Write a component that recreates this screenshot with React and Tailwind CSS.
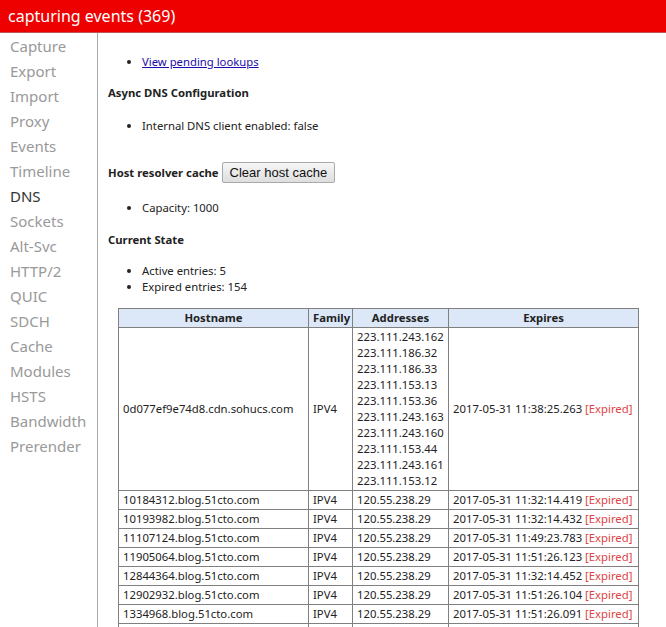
import React from "react";

const tabs = [
  "Capture", "Export", "Import", "Proxy", "Events", "Timeline", "DNS", "Sockets",
  "Alt-Svc", "HTTP/2", "QUIC", "SDCH", "Cache", "Modules", "HSTS", "Bandwidth", "Prerender",
];

const addrs = [
  "223.111.243.162", "223.111.186.32", "223.111.186.33", "223.111.153.13", "223.111.153.36",
  "223.111.243.163", "223.111.243.160", "223.111.153.44", "223.111.243.161", "223.111.153.12",
];

const rows = [
  ["10184312.blog.51cto.com", "2017-05-31 11:32:14.419"],
  ["10193982.blog.51cto.com", "2017-05-31 11:32:14.432"],
  ["11107124.blog.51cto.com", "2017-05-31 11:49:23.783"],
  ["11905064.blog.51cto.com", "2017-05-31 11:51:26.123"],
  ["12844364.blog.51cto.com", "2017-05-31 11:32:14.452"],
  ["12902932.blog.51cto.com", "2017-05-31 11:51:26.104"],
  ["1334968.blog.51cto.com", "2017-05-31 11:51:26.091"],
];

const td = "border border-[#808080] px-[4px] py-[1px] align-middle whitespace-nowrap";
const th = "border border-[#808080] px-[4px] py-[1px] font-bold text-center bg-[#dce8f8]";

export default function App() {
  return (
    <div className="w-[666px] h-[627px] overflow-hidden bg-white font-['Noto_Sans','Open_Sans',sans-serif] text-[#222]">
      <div className="h-[33px] bg-[#ee0000] border-b border-[#b55] text-white text-[16px] leading-[32px] pl-[8px]">
        capturing events (369)
      </div>
      <div className="flex h-[594px]">
        <div className="w-[98px] shrink-0 border-r border-[#aaa] pt-[1px] pl-[10px]">
          {tabs.map((t) => (
            <div
              key={t}
              className={`text-[15px] leading-[25px] ${t === "DNS" ? "text-[#333]" : "text-[#999]"}`}
            >
              {t}
            </div>
          ))}
        </div>
        <div className="flex-1 pl-[10px] text-[11.3px] leading-[16px]">
          <ul className="list-disc pl-[34px] mt-[21px]">
            <li>
              <a href="#" className="text-[#1a0dab] underline">View pending lookups</a>
            </li>
          </ul>
          <div className="font-bold mt-[15px]">Async DNS Configuration</div>
          <ul className="list-disc pl-[34px] mt-[17px]">
            <li>Internal DNS client enabled: false</li>
          </ul>
          <div className="flex items-center mt-[28px] h-[21px]">
            <span className="font-bold">Host resolver cache</span>
            <button className="ml-[3px] h-[21px] px-[7px] border border-[#a9a9a9] rounded-[2px] bg-gradient-to-b from-[#f6f6f6] to-[#dedede] text-[13px] leading-[19px] text-[#111] font-['Liberation_Sans',Arial,sans-serif]">
              Clear host cache
            </button>
          </div>
          <ul className="list-disc pl-[34px] mt-[17px]">
            <li>Capacity: 1000</li>
          </ul>
          <div className="font-bold mt-[16px]">Current State</div>
          <ul className="list-disc pl-[34px] mt-[15px]">
            <li>Active entries: 5</li>
            <li>Expired entries: 154</li>
          </ul>
          <table className="ml-[10px] mt-[13px] border-collapse table-fixed w-[520px]">
            <colgroup>
              <col className="w-[190px]" />
              <col className="w-[44px]" />
              <col className="w-[96px]" />
              <col className="w-[190px]" />
            </colgroup>
            <thead>
              <tr>
                <th className={th}>Hostname</th>
                <th className={th}>Family</th>
                <th className={th}>Addresses</th>
                <th className={th}>Expires</th>
              </tr>
            </thead>
            <tbody>
              <tr>
                <td className={td}>0d077ef9e74d8.cdn.sohucs.com</td>
                <td className={td}>IPV4</td>
                <td className={td}>
                  {addrs.map((a) => (
                    <div key={a}>{a}</div>
                  ))}
                </td>
                <td className={td}>
                  2017-05-31 11:38:25.263 <span className="text-[#e04343]">[Expired]</span>
                </td>
              </tr>
              {rows.map(([h, e]) => (
                <tr key={h}>
                  <td className={td}>{h}</td>
                  <td className={td}>IPV4</td>
                  <td className={td}>120.55.238.29</td>
                  <td className={td}>
                    {e} <span className="text-[#e04343]">[Expired]</span>
                  </td>
                </tr>
              ))}
              <tr className="h-[19px]">
                <td className={td}></td>
                <td className={td}></td>
                <td className={td}></td>
                <td className={td}></td>
              </tr>
            </tbody>
          </table>
        </div>
      </div>
    </div>
  );
}
